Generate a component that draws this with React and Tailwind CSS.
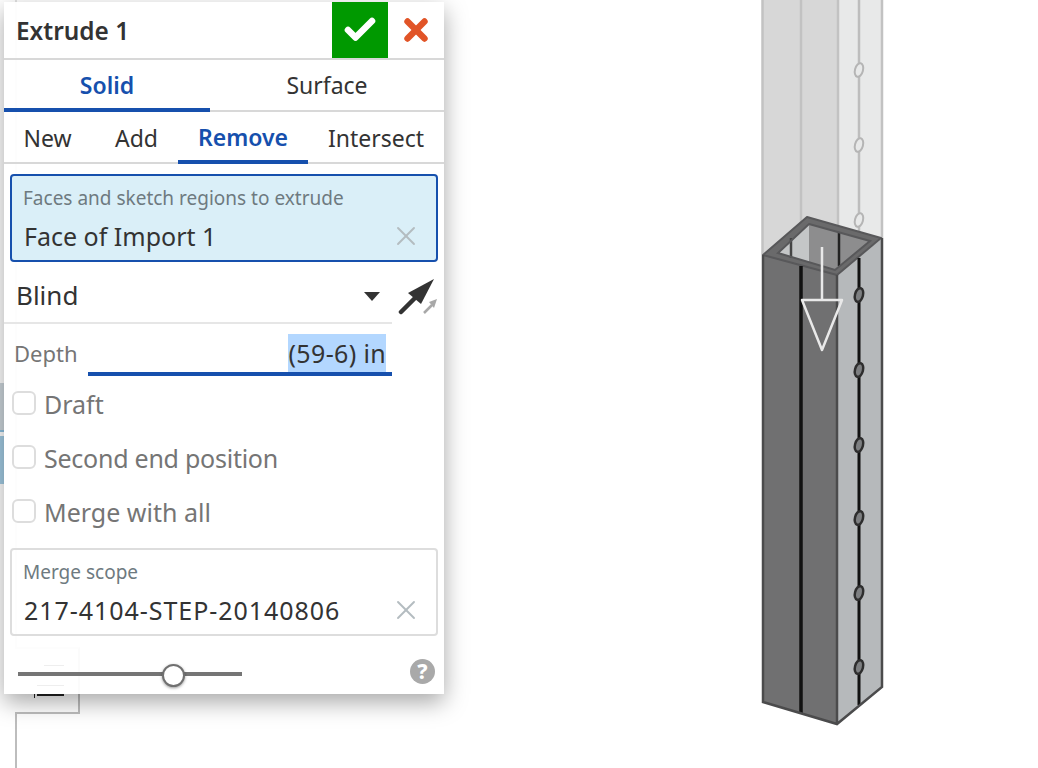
import React from "react";
import { Check, X } from "lucide-react";

function Drawing() {
  const ghostHoles = [70, 145, 220];
  const holes = [295, 370, 445, 518, 593, 667];
  return (
    <svg className="absolute left-[740px] top-0 blur-[0.6px]" width="160" height="768" viewBox="740 0 160 768" fill="none">
      <polygon points="762,0 838,0 838,240 763,255" fill="#d7d7d7" />
      <polygon points="838,0 882,0 882,238 838,240" fill="#e8e9e9" />
      <path d="M762.5 0V255M801 0V230M838 0V240M882 0V238" stroke="#c2c2c2" strokeWidth="2.5" />
      <path d="M859 0V235" stroke="#bdbdbd" strokeWidth="2.5" />
      {ghostHoles.map((y) => (
        <ellipse key={y} cx="859" cy={y} rx="4" ry="7" transform={`rotate(15 859 ${y})`} fill="#e8e9e9" stroke="#b5b5b5" strokeWidth="2" />
      ))}
      <polygon points="763,255 837,275 837,724 762,702" fill="#707071" />
      <polygon points="837,275 882,238 882,687 837,724" fill="#b6b9bb" />
      <polygon points="807,217 881,238 837,275 763,255" fill="#6a6a6b" stroke="#58585a" strokeWidth="2" strokeLinejoin="round" />
      <polygon points="809,224 870,241 835,270 778,253" fill="#8d8d8e" />
      <polygon points="778,253 809,224 809,262" fill="#c4c6c7" />
      <path d="M791 238V258" stroke="#444" strokeWidth="2.5" />
      <path d="M839 232V266" stroke="#222" strokeWidth="2.5" />
      <polygon points="809,224 870,241 835,270 778,253" fill="none" stroke="#58585a" strokeWidth="2" />
      <path d="M801 266V714" stroke="#111" strokeWidth="3.5" />
      <path d="M859 258V705" stroke="#111" strokeWidth="3" />
      {holes.map((y) => (
        <ellipse key={y} cx="859" cy={y} rx="4" ry="7" transform={`rotate(15 859 ${y})`} fill="#7d7f81" stroke="#2e2e2e" strokeWidth="2.5" />
      ))}
      <path d="M763 255V702L837 724L882 687V238M837 275V724" stroke="#4b4b4c" strokeWidth="2.5" />
      <path d="M822 247V300" stroke="#e9e9e9" strokeWidth="2.5" />
      <polygon points="802,300 842,300 822,350" stroke="#e9e9e9" strokeWidth="2.5" strokeLinejoin="round" />
    </svg>
  );
}

function Backdrop() {
  return (
    <>
      <div className="absolute left-0 top-[383px] w-[4px] h-[47px] bg-[#cdd6dc]" />
      <div className="absolute left-0 top-[430px] w-[4px] h-[2px] bg-[#8dc0e0]" />
      <div className="absolute left-0 top-[436px] w-[4px] h-[48px] bg-[#a3cce4]" />
      <div className="absolute left-[15px] top-0 w-[2px] h-[648px] bg-[#e2e2e2]" />
      <div className="absolute left-[15px] top-[647px] w-[65px] h-[67px] border-2 border-[#bdbdbd] border-l-0 border-t-[#ddd]" />
      <div className="absolute left-[15px] top-[712px] w-[2px] h-[56px] bg-[#bdbdbd]" />
      <div className="absolute left-[44px] top-[665px] w-[20px] h-[1px] bg-[#111]" />
      <div className="absolute left-[37px] top-[685px] w-[27px] h-[1px] bg-[#111]" />
      <div className="absolute left-[37px] top-[694px] w-[27px] h-[2px] bg-[#222]" />
      <div className="absolute left-[34px] top-[694px] w-[1px] h-[4px] bg-[#222]" />
    </>
  );
}

function ClearX() {
  return <X className="text-[#b4bcc0] -my-1 shrink-0" size={32} strokeWidth={1.4} />;
}

function Check2({ label, tight }) {
  return (
    <div className="flex items-center h-[54px] pl-2">
      <div className="w-6 h-6 rounded-[6px] border-2 border-[#dddddd] bg-white" />
      <span className={`ml-2 mt-[2px] text-[25px] text-[#757575] leading-none ${tight ? "tracking-[-0.25px]" : ""}`}>{label}</span>
    </div>
  );
}

function Field({ label, value, active, wide }) {
  return (
    <div className={`h-[88px] mx-[6px] rounded-[4px] border-2 pl-[11px] pr-[14px] flex flex-col ${active ? "border-[#1650ad] bg-[#daeff8]" : "border-[#dddddd]"}`}>
      <div className="mt-[9px] text-[19px] leading-[26px] text-[#6e7a80]">{label}</div>
      <div className="flex items-center justify-between mt-[10px] leading-[30px]">
        <span className={`text-[25px] text-[#333] ml-[1px] ${wide ? "tracking-[0.95px]" : ""}`}>{value}</span>
        <ClearX />
      </div>
    </div>
  );
}

export default function App() {
  return (
    <div className="relative w-[1038px] h-[768px] bg-white overflow-hidden font-['Noto_Sans',sans-serif]">
      <Backdrop />
      <Drawing />
      <div className="absolute left-[4px] top-[2px] w-[440px] h-[692px] bg-white/[0.93] shadow-[0_8px_22px_rgba(0,0,0,0.35)] flex flex-col">
        <div className="h-[58px] shrink-0 flex items-center border-b-2 border-[#d8d8d8]">
          <div className="flex-1 pl-[12px] pt-[2px] text-[24.4px] font-semibold text-[#333]">Extrude 1</div>
          <div className="w-[56px] h-[56px] self-start bg-[#009900] flex items-center justify-center">
            <Check className="text-white" size={36} strokeWidth={4.4} />
          </div>
          <div className="w-[56px] h-[56px] self-start flex items-center justify-center">
            <X className="text-[#e15427]" size={34} strokeWidth={4.5} />
          </div>
        </div>
        <div className="h-[52px] shrink-0 flex border-b-2 border-[#d8d8d8]">
          <div className="w-[206px] h-[52px] pt-[2px] border-b-4 border-[#1650ad] flex items-center justify-center text-[23px] font-semibold text-[#1650ad]">Solid</div>
          <div className="flex-1 flex items-center justify-center text-[23px] text-[#333]">Surface</div>
        </div>
        <div className="h-[52px] shrink-0 flex border-b-2 border-[#d8d8d8] text-[23px] text-[#333]">
          <div className="w-[87px] pt-[2px] flex items-center justify-center">New</div>
          <div className="w-[87px] pt-[2px] pl-[4px] flex items-center justify-center">Add</div>
          <div className="w-[130px] h-[52px] pt-[2px] border-b-4 border-[#1650ad] flex items-center justify-center font-semibold text-[#1650ad]">Remove</div>
          <div className="flex-1 pt-[2px] flex items-center justify-center">Intersect</div>
        </div>
        <div className="h-[10px] shrink-0" />
        <Field label="Faces and sketch regions to extrude" value="Face of Import 1" active />
        <div className="flex h-[62px] shrink-0">
          <div className="w-[388px] flex items-center justify-between border-b-2 border-[#e6e6e6] pl-[12px] pr-[12px]">
            <span className="text-[26px] text-[#333] mt-[6px] leading-[34px]">Blind</span>
            <svg width="16" height="9" viewBox="0 0 16 9" className="mt-[8px]"><polygon points="0,0 16,0 8,9" fill="#333" /></svg>
          </div>
          <div className="flex-1 pl-[6px] pt-[16px]">
            <svg width="40" height="38" viewBox="0 0 40 38">
              <path d="M3 34L18 19" stroke="#333" strokeWidth="4.5" strokeLinecap="round" />
              <polygon points="36,1 10,15 23,26" fill="#333" />
              <path d="M26 35L34 27" stroke="#a8a8a8" strokeWidth="2.5" />
              <polygon points="39,21 31,24 36,30" fill="#a8a8a8" />
            </svg>
          </div>
        </div>
        <div className="flex h-[52px] shrink-0 items-end">
          <div className="w-[84px] pl-[10px] pb-[8px] text-[22px] text-[#757575] leading-[30px]">Depth</div>
          <div className="w-[304px] h-[42px] border-b-4 border-[#1650ad] flex justify-end pr-[6px]">
            <span className="h-[38px] leading-[38px] bg-[#b3d7ff] text-[25px] tracking-[0.35px] text-[#333]">(59-6) in</span>
          </div>
        </div>
        <Check2 label="Draft" />
        <Check2 label="Second end position" tight />
        <Check2 label="Merge with all" />
        <div className="h-[10px] shrink-0" />
        <Field label="Merge scope" value="217-4104-STEP-20140806" wide />
        <div className="flex-1 flex items-center justify-between pl-[14px] pr-[9px]">
          <div className="relative w-[224px] h-[4px] bg-[#757575] mt-[15px] -mb-[2px]">
            <div className="absolute left-[144px] -top-[8px] w-[23px] h-[23px] rounded-full bg-white border-2 border-[#707070] shadow-[0_1px_3px_rgba(0,0,0,0.4)]" />
          </div>
          <div className="w-[25px] h-[25px] mt-[13px] rounded-full bg-[#a9a9a9] flex items-center justify-center text-white text-[21px] font-extrabold leading-none">?</div>
        </div>
      </div>
    </div>
  );
}
